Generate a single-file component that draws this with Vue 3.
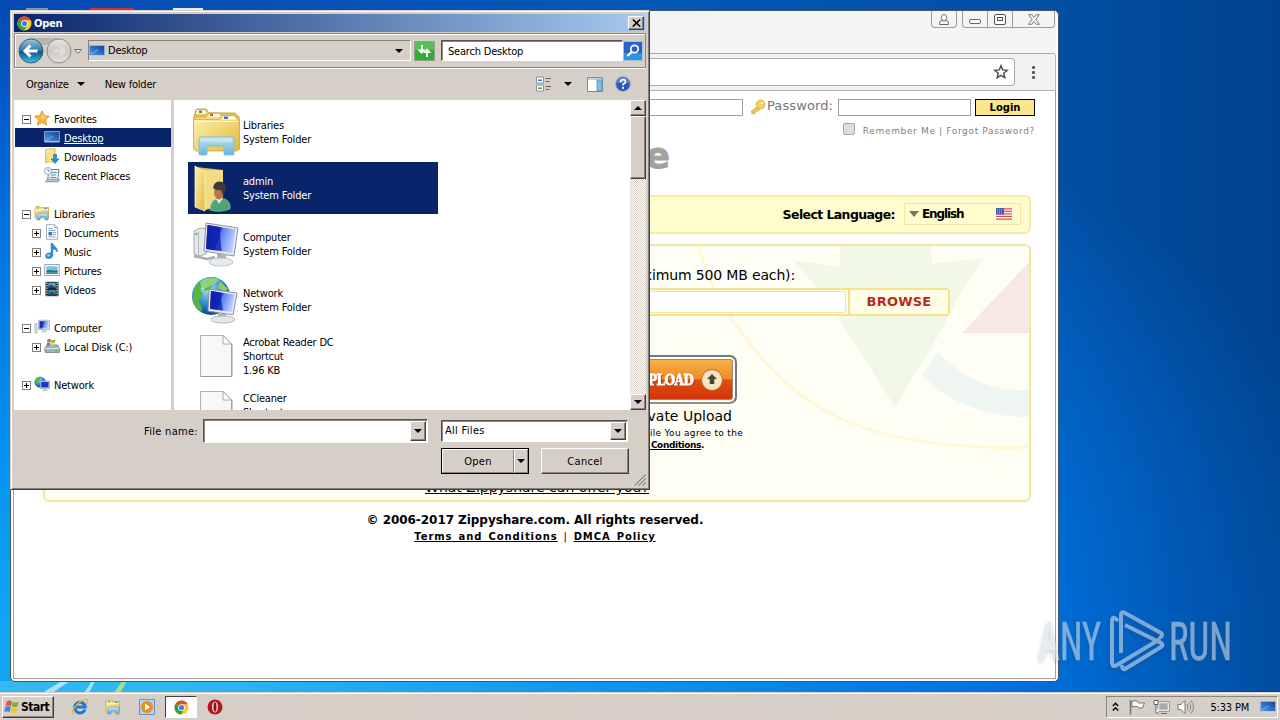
<script setup>
import { ref } from 'vue'

const tree = ref([
  { name: 'Favorites', icon: 'star', level: 0, box: '-' },
  { name: 'Desktop', icon: 'desktop', level: 1, active: true },
  { name: 'Downloads', icon: 'downloads', level: 1 },
  { name: 'Recent Places', icon: 'recent', level: 1 },
  { gap: true },
  { name: 'Libraries', icon: 'libraries', level: 0, box: '-' },
  { name: 'Documents', icon: 'document', level: 1, box: '+' },
  { name: 'Music', icon: 'music', level: 1, box: '+' },
  { name: 'Pictures', icon: 'pictures', level: 1, box: '+' },
  { name: 'Videos', icon: 'videos', level: 1, box: '+' },
  { gap: true },
  { name: 'Computer', icon: 'computer', level: 0, box: '-' },
  { name: 'Local Disk (C:)', icon: 'disk', level: 1, box: '+' },
  { gap: true },
  { name: 'Network', icon: 'network', level: 0, box: '+' }
])

const files = ref([
  { icon: 'big-libraries', lines: ['Libraries', 'System Folder'] },
  { icon: 'big-admin', lines: ['admin', 'System Folder'], selected: true },
  { icon: 'big-computer', lines: ['Computer', 'System Folder'] },
  { icon: 'big-network', lines: ['Network', 'System Folder'] },
  { icon: 'big-file', lines: ['Acrobat Reader DC', 'Shortcut', '1.96 KB'] },
  { icon: 'big-file', lines: ['CCleaner', 'Shortcut', '\u00a0'] }
])
</script>

<template>
  <div class="screen">
    <!-- icon sprites -->
    <svg class="sprites" width="0" height="0">
      <defs>
        <linearGradient id="gFolder" x1="0" y1="0" x2="1" y2="1">
          <stop offset="0" stop-color="#fdf3b4" /><stop offset="1" stop-color="#e3b83c" />
        </linearGradient>
        <linearGradient id="gStand" x1="0" y1="0" x2="0" y2="1">
          <stop offset="0" stop-color="#c4e8f8" /><stop offset="1" stop-color="#58b0da" />
        </linearGradient>
        <linearGradient id="gScreen" x1="0" y1="0" x2="1" y2="0.3">
          <stop offset="0" stop-color="#1226a8" /><stop offset="0.5" stop-color="#1a35d8" />
          <stop offset="0.55" stop-color="#5c7cf0" /><stop offset="1" stop-color="#b8ccff" />
        </linearGradient>
        <linearGradient id="gDesk" x1="0" y1="1" x2="1" y2="0">
          <stop offset="0" stop-color="#4d9df0" /><stop offset="1" stop-color="#173f92" />
        </linearGradient>
        <radialGradient id="gGlobe" cx="0.4" cy="0.3" r="0.7">
          <stop offset="0" stop-color="#a9e4f8" /><stop offset="0.6" stop-color="#2c87c8" /><stop offset="1" stop-color="#14448c" />
        </radialGradient>
        <linearGradient id="gBack" x1="0" y1="0" x2="0" y2="1">
          <stop offset="0" stop-color="#9cc7de" /><stop offset="0.48" stop-color="#2f7ca8" />
          <stop offset="0.5" stop-color="#0c4f82" /><stop offset="1" stop-color="#35c4ee" />
        </linearGradient>
        <linearGradient id="gFwd" x1="0" y1="0" x2="0" y2="1">
          <stop offset="0" stop-color="#e8e6e2" /><stop offset="0.5" stop-color="#cac7c1" /><stop offset="1" stop-color="#e6e3de" />
        </linearGradient>
        <linearGradient id="gGlow" x1="0" y1="0" x2="1" y2="0">
          <stop offset="0" stop-color="#4cc6ee" stop-opacity=".6" /><stop offset="1" stop-color="#2a9af0" stop-opacity="0" />
        </linearGradient>
      </defs>

      <symbol id="chrome" viewBox="0 0 16 16">
        <circle cx="8" cy="8" r="7.5" fill="#fbc927" />
        <path d="M8 8 1.5 4.2A7.5 7.5 0 0 1 14.5 4.4H8z" fill="#dc4a38" />
        <path d="M8 8 1.5 4.2A7.5 7.5 0 0 0 7.4 15.5L11 9.6z" fill="#2fa04e" />
        <circle cx="8" cy="8" r="3.6" fill="#fff" /><circle cx="8" cy="8" r="2.8" fill="#3f80e4" />
      </symbol>
      <symbol id="star" viewBox="0 0 16 16">
        <path d="M8 .8l2.2 4.9 5.2.6-3.9 3.5 1.1 5.3L8 12.4l-4.6 2.7 1.1-5.3L.6 6.3l5.2-.6z" fill="#f9b738" stroke="#d98718" stroke-width=".8" />
        <path d="M8 3.2l1.4 3.3 3 .5-3 .9L8 11z" fill="#fddc7c" />
      </symbol>
      <symbol id="desktop" viewBox="0 0 16 16">
        <path d="M.5 2.5h15v10H.5z" fill="url(#gDesk)" stroke="#8fb6dc" stroke-width=".8" />
        <path d="M.5 12.9h15" stroke="#c7dcf0" /><path d="M2 11c3-1 4-3 7-4" stroke="#9ccafa" fill="none" stroke-width=".7" />
      </symbol>
      <symbol id="downloads" viewBox="0 0 16 16">
        <path d="M1.5 1.5 6 .7h5V14H4l-2.5 1z" fill="url(#gFolder)" stroke="#d2a83a" stroke-width=".7" />
        <path d="M4.5 2.8 10 1.5V13L4.5 15z" fill="#fbe58b" />
        <path d="M9.5 6.5h3V11H15l-4 4.5L7 11h2.5z" fill="#2b8fd6" stroke="#1b67ac" stroke-width=".6" />
      </symbol>
      <symbol id="recent" viewBox="0 0 16 16">
        <path d="M5 2.5h10L13.5 14H3.500z" fill="#eaf1f6" stroke="#71828d" />
        <path d="M7 5.500h6M7 8h5M6 10.500h6" stroke="#6f8fa7" /><path d="M1.500 14.800h13l1-2.500H3z" fill="#bbc9d3" stroke="#6d7f8b" stroke-width=".7" />
        <circle cx="4" cy="4" r="3.500" fill="#f8fbfd" stroke="#9aa9b4" /><path d="M4 2v2h1.500" fill="none" stroke="#3a5a75" stroke-width=".8" />
      </symbol>
      <symbol id="libraries" viewBox="0 0 16 16">
        <path d="M1 3.500 2 1.500h4l1 1h7.500V13H1z" fill="url(#gFolder)" stroke="#d0a43a" stroke-width=".7" />
        <path d="M2 4.700h12" stroke="#fff7cf" /><path d="M3 3h2" stroke="#2e9b5b" /><path d="M10 3.300h3" stroke="#5a8bc9" />
        <path d="M3 15V9.500q0-1.500 1.500-1.500h8q1.500 0 1.500 1.500V15h-3v-3.300H6V15z" fill="url(#gStand)" stroke="#5097c1" stroke-width=".6" />
      </symbol>
      <symbol id="document" viewBox="0 0 16 16">
        <path d="M2.500.700h8l3.200 3V15.300H2.500z" fill="#fff" stroke="#8a99a7" stroke-width=".8" /><path d="M10.500.700v3h3.200" fill="#d6e1ea" stroke="#8a99a7" stroke-width=".7" />
        <path d="M4.500 4.500H9M4.500 6.500h7M9 8.500h3M9 10.500h3M4.500 12.800h7" stroke="#6e8fb5" stroke-width=".8" /><path d="M4.500 8h3.700v3.400H4.500z" fill="#3a77bd" />
      </symbol>
      <symbol id="music" viewBox="0 0 16 16">
        <path d="M7.200 .500h1.600c.6 3 5.200 3.800 4.400 8.500-.5-2-2.400-3-4.400-3.200v6.700C8.800 16 1.500 16.800 1.500 13c0-2.400 2.700-3.600 5.700-2.800z" fill="#2d8de0" stroke="#175fa8" stroke-width=".6" />
        <ellipse cx="4.600" cy="12.400" rx="1.900" ry="1.100" fill="#8fd0fa" />
      </symbol>
      <symbol id="pictures" viewBox="0 0 16 16">
        <path d="M.700 2.500h14.600v11H.700z" fill="#f7fafc" stroke="#8c9dac" stroke-width=".9" /><path d="M2.500 4.300h11v7.400h-11z" fill="#75c0e6" />
        <path d="M2.500 8.600c3-2 5 1 11-.6v3.700h-11z" fill="#2c6f6b" /><path d="M2.500 10.700h11" stroke="#57a2a7" />
      </symbol>
      <symbol id="videos" viewBox="0 0 16 16">
        <path d="M1.500.800h13v14.400h-13z" fill="#1f2a33" /><path d="M4.300 1.800h7.400V7H4.300z" fill="#5aa0de" /><path d="M4.300 9h7.400v5.200H4.300z" fill="#3c81c7" />
        <path d="M4.300 5.500 7 3.500l4.700 3V7H4.300zM4.300 13l3-2.200 4.400 2.500v.9H4.300z" fill="#2b4c3c" />
        <path d="M2.900 1.500v13M13.100 1.500v13" stroke="#e3ebf0" stroke-width="1.300" stroke-dasharray="1.300 1.200" />
      </symbol>
      <symbol id="computer" viewBox="0 0 16 16">
        <path d="M.800 5 3 4.500V14l-2.200-.5z" fill="#dfe4e8" stroke="#8e979e" stroke-width=".6" />
        <path d="M4.500 1.200h11v9.300h-11z" fill="#dfe6ee" stroke="#8b98a8" stroke-width=".6" /><path d="M5.500 2.200h9v7.300h-9z" fill="url(#gScreen)" />
        <path d="M8.500 10.500h3l1.800 2.700H6.700z" fill="#c7ced5" />
      </symbol>
      <symbol id="disk" viewBox="0 0 16 16">
        <path d="M.800 10 3 7h10.500l1.800 3.300v4.200H1.200z" fill="#a5b3b6" stroke="#61706f" stroke-width=".7" /><path d="M1 10.500h14" stroke="#dde8e8" />
        <path d="M11 12.700h3" stroke="#49d03c" stroke-width="1.400" /><path d="M3.500 1.600q2-1.300 3.600-.2L6.500 4.300q-2-.9-3.500.2z" fill="#e8592b" />
        <path d="M7.700 1.700q2 1 3.700 0L10.800 4.600q-2 .9-3.700 0z" fill="#6fb536" /><path d="M2.900 5q2-1.100 3.500-.2l-.6 2.800q-1.600-.8-3.300.2z" fill="#3d8ddc" /><path d="M7 5.100q2 1 3.700.1l-.6 2.700q-1.800.8-3.600 0z" fill="#f6c12f" />
      </symbol>
      <symbol id="network" viewBox="0 0 16 16">
        <circle cx="6" cy="6" r="5.500" fill="url(#gGlobe)" /><path d="M2 3q3-3 5-1L5 5 3 8 1 6z" fill="#53b54c" />
        <path d="M6.300 5h9.200v7.500H6.300z" fill="#e0e6ee" stroke="#8290a0" stroke-width=".6" /><path d="M7.200 5.900h7.400v5.600H7.200z" fill="#1b37c9" /><path d="M9.500 12.500h3l1.500 2.500H8z" fill="#c3cad1" />
      </symbol>

      <symbol id="big-libraries" viewBox="0 0 48 48">
        <path d="M2 9 4 2l1-1h9l3 4h26l4 4v32H2z" fill="#e6c45c" stroke="#b98d2c" stroke-width=".8" />
        <path d="M5 2h8l2 4H4z" fill="#f3f6ec" /><path d="M7 2.500h3V5H7z" fill="#3b9c56" />
        <path d="M2 9h12q1-4 3-4h11l3 4h16v32H2z" fill="#f5dc7f" stroke="#cba246" stroke-width=".8" />
        <path d="M17.500 6h9l2 3h-12z" fill="#fdfbe8" /><path d="M18 5.500h3V8h-3z" fill="#d0572d" />
        <path d="M1.500 11.500H28q1-4 3-4h12l3 3.500q2 1 1.500 3V41l-2 2H3.500l-2-2z" fill="url(#gFolder)" stroke="#d3aa45" stroke-width=".8" />
        <path d="M31 8.500h11l2 3H29.500z" fill="#fff" /><path d="M32 8.500h4V11h-4z" fill="#367dbf" /><path d="M3 13.500h43" stroke="#fff8d0" />
        <path d="M7 46V31q0-2 2-2h31q2 0 2 2v15q0 1-1 1h-8q-1 0-1-1v-8H15v8q0 1-1 1H8q-1 0-1-1z" fill="url(#gStand)" stroke="#7fbfdd" fill-opacity=".92" />
        <path d="M9 30h31v4H9z" fill="#c9ebfa" opacity=".6" />
      </symbol>
      <symbol id="big-admin" viewBox="0 0 48 48">
        <path d="M4 3 31 6v36l-18 4z" fill="#e0bb4d" /><path d="M11 6h20v36l-18 3z" fill="#f2dc83" />
        <path d="M3 2 13 8v39L3 43z" fill="url(#gFolder)" stroke="#fff5be" stroke-width=".8" />
        <path d="M18 46q1-11 8-11h7q6 3 5 10-10 4-20 1z" fill="#4fa477" stroke="#7cc79f" stroke-width=".7" /><path d="m24 35 3 5 4-6z" fill="#dbe8ed" />
        <ellipse cx="27" cy="28" rx="5" ry="7.500" fill="#ba7647" /><path d="M21 24q1-7 7-6.500 6 .5 5.500 7L31 34q0-5-2-8-4 1-8-2z" fill="#3e3a36" />
      </symbol>
      <symbol id="big-computer" viewBox="0 0 48 48">
        <path d="m2 11 6-3 7 1v24l-6 3-7-2z" fill="#e5e8eb" stroke="#a4aaaf" /><path d="M6.500 11v23" stroke="#b4babf" /><circle cx="4.300" cy="14" r="1.200" fill="#43cd36" />
        <path d="m2 36 13 3 8-2" stroke="#a4abb1" stroke-width="2.500" fill="none" />
        <path d="m14 3 32 5-4 28-30-5z" fill="#e5ebf1" stroke="#8a949e" /><path d="m15.500 5 28 4.500L40 33l-26-4z" fill="url(#gScreen)" /><path d="m15.500 5 12 2 2 24-15.500-2z" fill="#0d1fa8" opacity=".75" />
        <path d="M25 34h9v7h-9z" fill="#abb3ba" /><ellipse cx="29" cy="42" rx="12" ry="4" fill="#e8ebed" stroke="#bcc1c5" />
      </symbol>
      <symbol id="big-network" viewBox="0 0 48 48">
        <circle cx="19" cy="20" r="19" fill="url(#gGlobe)" /><path d="M1 22Q1 8 12 3l3 4-7 6 3 6-5 5 4 8-1 4Q1 30 1 22zM15 2q7-2 12 1l-6 4-2 6-6 2-2-4z" fill="#55b83b" /><path d="m28 5 8 8-3 3-7-4z" fill="#88cf62" />
        <path d="M8 6Q18-1 28 4q-8 6-18 10z" fill="#fff" opacity=".35" />
        <path d="m17 13 28 4-4 22-25-4z" fill="#e6ebf1" stroke="#8b95a0" /><path d="m19 15 23.500 3.500L39.500 36 18 33z" fill="url(#gScreen)" /><path d="m19 15 9 1.500 3 18-13-2z" fill="#0d1fa8" opacity=".75" />
        <path d="M26 38h8v5h-8z" fill="#abb3ba" /><ellipse cx="31" cy="43.500" rx="12" ry="3.500" fill="#e3e7ea" stroke="#b5babf" />
      </symbol>
      <symbol id="big-file" viewBox="0 0 48 48">
        <path d="M8.500 3.500H31l8.500 8.500V44.500H8.500z" fill="#f8f8f8" stroke="#b0b0b0" /><path d="M40 12v32.500H9" fill="none" stroke="#9a9a9a" /><path d="M31 3.500v8.500h8.500z" fill="#fff" stroke="#a7a7a7" />
      </symbol>
    </svg>

    <svg class="streaks" width="900" height="12" viewBox="0 0 900 12">
      <path d="M0 0h900v12H0z" fill="url(#gGlow)" />
      <path d="M42 12 62 0h8L52 12zM84 12 92 0h3l-6 12z" fill="#c9eefb" opacity=".8" />
      <path d="m114 12 8-12h5l-7 12z" fill="#c4e87a" opacity=".8" />
    </svg>

    <!-- browser window -->
    <div class="browser">
      <div class="tabstrip">
        <div class="win-btn user">
          <svg width="12" height="13" viewBox="0 0 12 13"><path d="M6 1.500a2.700 2.700 0 0 1 2 4.500q-.5.500 0 1 2.500.5 2.500 4.500h-9Q1.500 7.500 4 7q.5-.5 0-1a2.700 2.700 0 0 1 2-4.500z" fill="#fff" stroke="#666" /><path d="M4 7.500q2 1 4 0" fill="none" stroke="#666" /></svg>
        </div>
        <div class="win-btn group">
          <span><svg width="12" height="5"><rect x=".5" y=".5" width="11" height="4" rx="1.500" fill="#fff" stroke="#666" /></svg></span>
          <span><svg width="12" height="11"><rect x=".5" y=".5" width="11" height="10" rx="1.500" fill="#fff" stroke="#555" /><rect x="3.500" y="3.500" width="5" height="3" fill="#fff" stroke="#555" /></svg></span>
          <span class="wide"><svg width="12" height="11" viewBox="0 0 12 11"><path d="M.700.700h3L6 3.500 8.300.700h3L7.900 5.500l3.400 4.800h-3L6 7.500l-2.300 2.800h-3l3.400-4.800z" fill="#fff" stroke="#666" stroke-width=".9" /></svg></span>
        </div>
      </div>
      <div class="toolbar">
        <div class="omnibox">
          <svg width="16" height="16" viewBox="0 0 16 16"><path d="M8 1.800l1.700 4.100 4.500.4-3.400 2.900 1 4.400L8 11.300l-3.800 2.300 1-4.400-3.400-2.900 4.500-.4z" fill="none" stroke="#505050" stroke-width="1.500" /></svg>
        </div>
        <div class="dots"><i></i><i></i><i></i></div>
      </div>
      <div class="page">
        <div class="login-row">
          <div class="text-input left"></div>
          <svg class="key" width="16" height="16" viewBox="0 0 16 16"><path d="M8 7 1.500 12l.5 3 3-.5.500-2 2-.300L10 10z" fill="#f1c654" stroke="#cf9c33" stroke-width=".7" /><circle cx="10.500" cy="5.500" r="4.500" fill="#f5cf6b" stroke="#d7a640" stroke-width=".7" /><circle cx="12" cy="4" r="1.200" fill="#fff3cc" /></svg>
          <span class="pass-label">Password:</span>
          <div class="text-input right"></div>
          <div class="login-btn">Login</div>
        </div>
        <div class="remember-row">
          <i class="checkbox"></i>
          <span>Remember Me | Forgot Password?</span>
        </div>
        <div class="brand">Zippyshare</div>
        <div class="lang-bar">
          <b>Select Language:</b>
          <div class="lang-select">
            <i class="tri"></i><b>English</b>
            <svg width="16" height="12" viewBox="0 0 16 12"><path d="M0 0h16v12H0z" fill="#fff" /><path d="M0 .900h16M0 3.400h16M0 5.900h16M0 8.400h16M0 11.100h16" stroke="#d94b4b" stroke-width="1.200" /><path d="M0 0h8v6.500H0z" fill="#4458ad" /><path d="M1 1.500h6M1 3.300h6M1 5h6" stroke="#c9d2f2" stroke-width=".7" stroke-dasharray="1 1" /></svg>
          </div>
        </div>
        <div class="panel">
          <svg class="art" viewBox="45 246 984 254" width="984" height="254">
            <path d="M840 246h91l1 18 51-6q-29 43-43 75l-45 74-47-74q-21-38-56-73l48 7z" fill="#f1f8e6" />
            <path d="M1029 262v71h-67z" fill="#f8e8e4" />
            <path d="M938 352q37 41 91 38v27q-62 1-107-41z" fill="#eff5f1" />
            <path d="M699 246q12 50 46 91c52 72 124 115 284 110" fill="none" stroke="#fef8d6" stroke-width="3" />
          </svg>
          <div class="form">
            <p class="limit">Select files to upload (maximum 500 MB each):</p>
            <div class="file-row">
              <div class="file-field"></div>
              <div class="browse">BROWSE</div>
            </div>
            <div class="upload">
              <span>UPLOAD</span>
              <svg width="24" height="24" viewBox="0 0 24 24"><circle cx="12" cy="12" r="10.500" fill="#f5e3c4" stroke="#b66a2b" /><path d="M12 6l5 5h-2.700v5H9.700v-5H7z" fill="#4b4437" /></svg>
            </div>
            <p class="private">Private Upload</p>
            <p class="agree">By uploading a file You agree to the</p>
            <p class="agree terms"><u>Terms and Conditions</u>.</p>
          </div>
          <p class="offer">What Zippyshare can offer you?</p>
        </div>
        <p class="copy">© 2006-2017 Zippyshare.com. All rights reserved.</p>
        <p class="links"><u>Terms and Conditions</u><span> | </span><u>DMCA Policy</u></p>
      </div>
    </div>

    <i class="shortcut grey"></i><i class="shortcut red"></i><i class="shortcut white"></i>

    <!-- open file dialog -->
    <div class="dialog">
      <div class="titlebar">
        <svg width="15" height="15"><use href="#chrome" /></svg>
        <b>Open</b>
        <div class="close raised"><svg width="9" height="8" viewBox="0 0 9 8"><path d="M.8.500 8.200 7.500M8.200.500.8 7.500" stroke="#000" stroke-width="1.700" /></svg></div>
      </div>
      <div class="nav">
        <svg class="arrows" width="66" height="28" viewBox="0 0 66 28">
          <path d="M14 1h28v7H14z" fill="#b8b4ad" />
          <circle cx="14" cy="14" r="12" fill="url(#gBack)" stroke="#385e77" /><path d="M20.500 14H9M13.500 8.500 8 14l5.500 5.500" fill="none" stroke="#fff" stroke-width="3" />
          <circle cx="42" cy="14" r="12" fill="url(#gFwd)" stroke="#8e8b87" /><path d="M36 14h11M43 9.500l4.500 4.500-4.500 4.500" fill="none" stroke="#dfddd9" stroke-width="2.500" />
          <path d="M57.500 12.500h7L61 16.500z" fill="#eee" stroke="#77736e" />
        </svg>
        <div class="address">
          <svg width="16" height="16"><use href="#desktop" /></svg>
          <span>Desktop</span>
          <i class="caret"></i>
        </div>
        <svg class="refresh" width="21" height="20" viewBox="0 0 21 20"><path d="M.500.500h20v19H.500z" fill="#2fae36" stroke="#8fa08c" /><path d="M1 1h19v8H1z" fill="#71cc6b" opacity=".6" /><path d="M8 4v5M13 16v-5" stroke="#fff" stroke-width="2" /><path d="M3.500 8.500h8L7.500 13zM9 12h8.500L13 7.500z" fill="#fff" /></svg>
        <div class="search">Search Desktop</div>
        <svg class="magnifier" width="20" height="20" viewBox="0 0 20 20"><path d="M.500.500h19v19H.500z" fill="#2a62c9" stroke="#a7bfd9" /><path d="M1 12h18v7H1z" fill="#2fa6e4" opacity=".75" /><path d="m4.500 15 4-4" stroke="#fff" stroke-width="2.300" /><circle cx="11.500" cy="8" r="3.700" fill="#2a62c9" stroke="#fff" stroke-width="1.700" /></svg>
      </div>
      <div class="commands">
        <span class="organize">Organize</span><i class="caret"></i>
        <span class="newfolder">New folder</span>
        <svg class="views" width="16" height="16" viewBox="0 0 16 16"><path d="M.500 1h7v6h-7zM.500 9h7v6h-7z" fill="#fff" stroke="#8296a5" /><path d="M2 3.500h4V5H2z" fill="#3a7cc2" /><path d="M2 11.500h4V13H2z" fill="#5a9453" /><path d="M9.500 2.500H15M9.500 5.500h4M9.500 10.500H15M9.500 13.500h4" stroke="#667" /></svg>
        <i class="caret"></i>
        <svg class="pane" width="16" height="15" viewBox="0 0 16 15"><path d="M.500.500h15v14H.500z" fill="#fff" stroke="#6e8fae" /><path d="M1 1h14v2H1z" fill="#b9d4ea" /><path d="M10 3h5v11h-5z" fill="#80bfe0" stroke="#4e87a9" stroke-width=".7" /></svg>
        <svg class="help" width="16" height="16" viewBox="0 0 16 16"><circle cx="8" cy="8" r="7.300" fill="#2e56b5" stroke="#90a0c6" /><path d="M1.500 7a6.500 6.500 0 0 1 13 0z" fill="#7596dc" opacity=".6" /><path d="M5.500 6.200Q5.500 3.700 8 3.700t2.500 2.200Q10.500 7.300 8 8.300v1.300" fill="none" stroke="#fff" stroke-width="1.700" /><circle cx="8" cy="11.900" r="1.100" fill="#fff" /></svg>
      </div>
      <div class="content">
        <div class="tree">
          <div v-for="(item, i) in tree" :key="i" class="tree-row" :class="{ active: item.active, sub: item.level === 1 }">
            <template v-if="!item.gap">
              <i class="expander" :class="{ hidden: !item.box, plus: item.box === '+' }"></i>
              <svg width="16" height="16"><use :href="'#' + item.icon" /></svg>
              <span>{{ item.name }}</span>
            </template>
          </div>
        </div>
        <div class="files">
          <div v-for="(file, i) in files" :key="i" class="file" :class="{ selected: file.selected }">
            <svg width="48" height="48"><use :href="'#' + file.icon" /></svg>
            <div>
              <p v-for="line in file.lines" :key="line">{{ line }}</p>
            </div>
          </div>
        </div>
        <div class="scrollbar">
          <div class="sb-btn raised"><i class="up"></i></div>
          <div class="thumb raised"></div>
          <div class="sb-btn raised bottom"><i class="caret"></i></div>
        </div>
      </div>
      <div class="footer">
        <div class="field-row">
          <span class="fn-label">File name:</span>
          <div class="combo name"><div class="drop raised"><i class="caret"></i></div></div>
          <div class="combo type"><span>All Files</span><div class="drop raised"><i class="caret"></i></div></div>
        </div>
        <div class="button-row">
          <div class="open-btn"><div class="raised">Open</div><div class="raised split"><i class="caret"></i></div></div>
          <div class="cancel-btn raised">Cancel</div>
        </div>
        <svg class="grip" width="13" height="13" viewBox="0 0 13 13"><path d="M0 13 13 0M4 13l9-9M8 13l5-5" stroke="#fff" /><path d="M1 13 13 1M5 13l8-8M9 13l4-4" stroke="#88847d" stroke-width="1.300" /></svg>
      </div>
    </div>

    <!-- watermark -->
    <svg class="watermark" width="220" height="72" viewBox="0 0 220 72">
      <text x="4" y="54" textLength="62" lengthAdjust="spacingAndGlyphs">ANY</text>
      <text x="134" y="54" textLength="63" lengthAdjust="spacingAndGlyphs">RUN</text>
      <path d="M83 15Q77 8 77 16v40q0 6 5 3l43-26" />
      <path d="M86 47V9q0-4 4-2l36 20q3 3-2 5M90 19l36 18q3 2 0 4L90 63q-3 1-3-4" />
    </svg>

    <!-- taskbar -->
    <div class="taskbar">
      <div class="start raised">
        <svg width="16" height="16" viewBox="0 0 16 16"><path d="M2.500 2.600q3-2.100 5.400-.4L7 7.200Q4.300 5.600 1.500 7.300z" fill="#e5592c" /><path d="M8.700 2.700q3 1.400 5.800 0l-1 4.900q-3 1.400-5.700 0z" fill="#72b53a" /><path d="M1.300 8.200q3-1.700 5.500-.1l-1 5q-2.500-1.500-5.500.100z" fill="#3c84d7" /><path d="M7.500 8.600q3 1.400 5.800 0l-1 4.900q-3 1.400-5.800 0z" fill="#f8c332" /></svg>
        <b>Start</b>
      </div>
      <div class="quick">
        <svg width="18" height="18" viewBox="0 0 18 18"><path d="M14 11.500A5.300 5.300 0 1 1 14.300 9H5" fill="none" stroke="#2478d0" stroke-width="3" /><path d="M2 16.500C-1 13 9 .500 16 1.500c1.500.700.500 3-.500 4.500" fill="none" stroke="#e9b92c" stroke-width="1.300" /></svg>
        <svg width="16" height="16"><use href="#libraries" /></svg>
        <svg width="16" height="16" viewBox="0 0 16 16"><path d="M.500.500h15v15H.500z" fill="#b2d4f2" stroke="#5d94cb" /><circle cx="8" cy="8" r="6" fill="#f18a1f" /><path d="m6 4.500 5 3.500-5 3.500z" fill="#fff" /></svg>
        <div class="running"><svg width="15" height="15"><use href="#chrome" /></svg></div>
        <svg width="16" height="16" viewBox="0 0 16 16"><circle cx="8" cy="8" r="7.500" fill="#b5141b" /><ellipse cx="8" cy="8" rx="3" ry="5.500" fill="#efe4df" /><ellipse cx="8" cy="8" rx="1.500" ry="4.800" fill="#8e1116" /></svg>
      </div>
      <div class="tray">
        <svg width="7" height="10" viewBox="0 0 7 10"><path d="M.800 4 3.500 1.300 6.200 4M.800 8.500l2.700-2.700 2.700 2.700" fill="none" stroke="#000" stroke-width="1.400" /></svg>
        <svg class="flag" width="17" height="16" viewBox="0 0 17 16"><path d="M1.500 1v14.500" stroke="#777" stroke-width="1.600" /><path d="M3 2.500q3-1.500 6 0l.500 1.500h6l-2 5H9.500L8.500 7.500Q6 6.800 3 8z" fill="#fff" stroke="#777" /></svg>
        <svg width="17" height="16" viewBox="0 0 17 16"><path d="M5.500 3.500h10v8h-10z" fill="#aaa" stroke="#fff" stroke-width="1.500" /><path d="M4.800 2.800h11.500v9.500H4.800z" fill="none" stroke="#666" stroke-width=".7" /><path d="M1 1.500h4v4H1zM3 5.500V14h3M8 14.500h6" fill="#fff" stroke="#666" /></svg>
        <svg width="17" height="16" viewBox="0 0 17 16"><path d="M1 5.500h3l4-4v13l-4-4H1z" fill="#fff" stroke="#777" /><path d="M10 5q2 3 0 6M12 3.500q3.500 4.500 0 9M14 1.500q5 6.500 0 13" fill="none" stroke="#888" /></svg>
        <span>5:33 PM</span>
        <svg width="16" height="16"><use href="#desktop" /></svg>
      </div>
    </div>
  </div>
</template>

<style>
html,
body {
  margin: 0;
  background: #0a63c9;
}
</style>

<style scoped>
.screen {
  position: relative;
  width: 1280px;
  height: 720px;
  overflow: hidden;
  font-family: "DejaVu Sans Condensed", "DejaVu Sans", sans-serif;
  font-stretch: condensed;
  font-size: 11px;
  letter-spacing: -0.2px;
  color: #000;
  background:
    linear-gradient(90deg, transparent 1060px, rgba(0, 45, 110, 0.25) 1280px),
    radial-gradient(ellipse 1250px 680px at 180px 660px, #1cb4f5 0%, #0595ee 30%, rgba(0, 116, 226, 0.95) 65%, rgba(0, 80, 190, 0) 100%),
    linear-gradient(90deg, #0646b0 0, #0458b8 50%, #004a98 100%);
}

p {
  margin: 0;
}

svg {
  display: block;
  flex: none;
}

.sprites {
  position: absolute;
}

.streaks {
  position: absolute;
  left: 0;
  top: 681px;
}

i {
  display: block;
  flex: none;
}

.shortcut {
  position: absolute;
  top: 8px;
  height: 2px;
}

.grey {
  left: 26px;
  width: 22px;
  background: #8294b8;
}

.red {
  left: 90px;
  width: 44px;
  background: #d7302a;
}

.white {
  left: 173px;
  width: 30px;
  background: #e4ebf5;
}

/* browser */
.browser {
  position: absolute;
  left: 10px;
  top: 10px;
  width: 1049px;
  height: 672px;
  box-sizing: border-box;
  border: 1px solid #43566a;
  border-radius: 0 5px 5px 5px;
  background: #fcfcfc;
  padding: 0 2px 2px;
  display: flex;
  flex-direction: column;
  font-family: "DejaVu Sans", sans-serif;
  font-stretch: normal;
  letter-spacing: 0;
}

.tabstrip {
  height: 42px;
  flex: none;
  background: #f4f4f4;
  display: flex;
  justify-content: flex-end;
  gap: 5px;
  padding-right: 1px;
}

.win-btn {
  height: 16px;
  border: 1px solid #9b9b9b;
  border-top: 0;
  border-radius: 0 0 4px 4px;
  display: flex;
}

.user {
  width: 24px;
  align-items: center;
  justify-content: center;
}

.group span {
  width: 24px;
  display: flex;
  align-items: center;
  justify-content: center;
  border-right: 1px solid #9b9b9b;
}

.group span:first-child {
  padding-top: 5px;
  box-sizing: border-box;
  width: 25px;
}

.group .wide {
  width: 41px;
  border-right: 0;
}

.toolbar {
  height: 36px;
  flex: none;
  border-top: 1px solid #a9a9a9;
  border-bottom: 1px solid #b4b4b4;
  border-right: 1px solid #b9b9b9;
  border-radius: 0 3px 0 0;
  background: #f2f2f2;
  display: flex;
  align-items: center;
}

.omnibox {
  box-sizing: border-box;
  width: 1002px;
  height: 28px;
  border: 1px solid #a9a9a9;
  border-radius: 3px;
  background: #fff;
  display: flex;
  align-items: center;
  justify-content: flex-end;
  padding-right: 5px;
}

.dots {
  margin-left: 17px;
  display: flex;
  flex-direction: column;
  gap: 2px;
}

.dots i {
  width: 3px;
  height: 3px;
  border-radius: 1px;
  background: #5a5a5a;
}

.page {
  flex: 1;
  background: #fff;
  border: solid #a79f9b;
  border-width: 0 1px 1px;
  padding: 8px 25px 0 29px;
}

.login-row {
  display: flex;
  justify-content: flex-end;
  height: 17px;
  margin-right: -5px;
  color: #777;
}

.text-input {
  box-sizing: border-box;
  height: 17px;
  border: 1px solid #a0a0a0;
  background: #fff;
}

.left {
  width: 133px;
}

.key {
  margin: 0 0 0 7px;
}

.pass-label {
  width: 71px;
  margin-left: 1px;
  font-size: 13px;
  line-height: 14px;
  letter-spacing: 0.1px;
}

.right {
  width: 133px;
}

.login-btn {
  box-sizing: border-box;
  width: 60px;
  margin-left: 4px;
  border: 1px solid #000;
  background: #fce58f;
  color: #000;
  font-weight: bold;
  font-size: 10px;
  line-height: 16px;
  text-align: center;
}

.remember-row {
  display: flex;
  justify-content: flex-end;
  align-items: center;
  margin: 7px -5px 0 0;
  height: 14px;
  font-size: 9px;
  letter-spacing: 0.65px;
  color: #808080;
}

.remember-row span {
  padding-top: 2px;
}

.checkbox {
  width: 10px;
  height: 10px;
  margin: -2px 8px 0 0;
  border: 1px solid #a5a5a5;
  border-radius: 2px;
  background: #dedede;
}

.brand {
  width: 626px;
  height: 30px;
  margin-top: 4px;
  text-align: right;
  font: 900 36px/29px "DejaVu Sans", sans-serif;
  letter-spacing: -1px;
  color: #a2a2a2;
  -webkit-text-stroke: 1px #a2a2a2;
}

.lang-bar {
  box-sizing: border-box;
  width: 988px;
  height: 39px;
  margin-top: 24px;
  border: 2px solid #f4eba4;
  border-radius: 6px;
  background: #fffcce;
  display: flex;
  align-items: center;
  justify-content: flex-end;
  padding-right: 8px;
  font-size: 13px;
}

.lang-bar > b {
  font-size: 12.500px;
  letter-spacing: -0.6px;
}

.lang-select {
  box-sizing: border-box;
  width: 117px;
  height: 22px;
  margin: -2px 0 0 9px;
  padding: 0 8px 0 4px;
  border: 1px solid #f2e6a2;
  display: flex;
  align-items: center;
  font-size: 12px;
  letter-spacing: -1.1px;
}

.lang-select svg {
  margin-left: auto;
}

.tri {
  margin-right: 3px;
  border: 5px solid transparent;
  border-top: 6px solid #77775a;
  border-bottom: 0;
}

.panel {
  position: relative;
  box-sizing: border-box;
  width: 988px;
  height: 258px;
  margin-top: 10px;
  border: 2px solid #f4e79b;
  border-radius: 6px;
  background: #fffef5;
}

.art {
  position: absolute;
  left: 0;
  top: 0;
}

.form {
  position: relative;
  width: 905px;
  padding-top: 19px;
  display: flex;
  flex-direction: column;
  align-items: flex-end;
}

.limit {
  margin-right: 155px;
  font-size: 14px;
  line-height: 20px;
  letter-spacing: -0.15px;
}

.file-row {
  display: flex;
  box-sizing: border-box;
  width: 700px;
  height: 28px;
  margin-top: 3px;
  border: 2px solid #f4e28d;
  border-radius: 4px;
  background: #fffce0;
}

.file-field {
  flex: 1;
  margin: 1px 2px 1px 0;
  border: 1px solid #f3e7a4;
  border-radius: 3px;
  background: #fff;
}

.browse {
  width: 98px;
  border-left: 2px solid #f4e08a;
  text-align: center;
  font-weight: bold;
  font-size: 13px;
  line-height: 24px;
  letter-spacing: 0.2px;
  color: #b52a22;
  background: #fffde6;
}

.upload {
  box-sizing: border-box;
  width: 200px;
  height: 49px;
  margin: 39px 213px 0 0;
  border: 2px solid #75787c;
  border-bottom-color: #9b8c7c;
  border-radius: 7px;
  background: linear-gradient(#fbb84d, #ef8a27 48%, #dc4e0e 52%, #d33008);
  box-shadow: inset 0 0 0 2px #fff, inset 0 0 0 3px #a7876c;
  display: flex;
  align-items: center;
  justify-content: flex-end;
  gap: 7px;
  padding-right: 11px;
  color: #fff;
  font: bold 15px "DejaVu Serif", serif;
  letter-spacing: -0.9px;
  -webkit-text-stroke: 0.8px #fff;
  text-shadow: 1px 1px 1px #8b300b;
}

.upload span {
  transform: scaleX(0.82);
  transform-origin: right;
}

.private {
  margin: 2px 218px 0 0;
  font-size: 14px;
  line-height: 20px;
}

.agree {
  margin: 1px 207px 0 0;
  font-size: 9px;
  line-height: 12px;
  letter-spacing: 0.3px;
}

.terms {
  margin: 0 246px 0 0;
  font-weight: bold;
  letter-spacing: -0.4px;
}

.offer {
  position: relative;
  width: 984px;
  margin-top: 26px;
  text-align: center;
  font-size: 14px;
  line-height: 20px;
  text-decoration: underline;
}

.copy {
  width: 984px;
  margin-top: 9px;
  text-align: center;
  font-weight: bold;
  font-size: 12px;
  line-height: 18px;
  letter-spacing: -0.05px;
}

.links {
  width: 984px;
  text-align: center;
  font-weight: bold;
  font-size: 10px;
  line-height: 15px;
  letter-spacing: 0.9px;
  word-spacing: 1.800px;
}

.links span {
  font-weight: normal;
}

/* dialog */
.raised {
  box-sizing: border-box;
  border: 1px solid;
  border-color: #fff #404040 #404040 #fff;
  box-shadow: inset -1px -1px 0 #8a867f;
  background: #d6cfc7;
}

.caret {
  border: 4px solid transparent;
  border-top-color: #000;
  border-bottom: 0;
}

.up {
  border: 4px solid transparent;
  border-bottom-color: #000;
  border-top: 0;
}

.dialog {
  position: absolute;
  left: 10px;
  top: 10px;
  width: 640px;
  height: 480px;
  box-sizing: border-box;
  border: 1px solid;
  border-color: #d6cfc7 #404040 #404040 #d6cfc7;
  box-shadow: inset 1px 1px 0 #fff, inset -1px -1px 0 #808080;
  background: #d6cfc7;
  padding: 3px;
  display: flex;
  flex-direction: column;
}

.titlebar {
  height: 18px;
  flex: none;
  background: linear-gradient(90deg, #0a246a, #a6caf0);
  display: flex;
  align-items: center;
  color: #fff;
  padding: 0 2px 0 3px;
  font-size: 11px;
}

.titlebar b {
  margin-left: 2px;
}

.close {
  margin-left: auto;
  width: 16px;
  height: 14px;
  display: flex;
  align-items: center;
  justify-content: center;
}

.nav {
  height: 35px;
  flex: none;
  box-sizing: border-box;
  margin-top: 1px;
  border: 1px solid #8a867f;
  box-shadow: inset 1px 1px 0 #fff, 0 1px 0 #fff;
  display: flex;
  align-items: center;
  padding-left: 2px;
}

.address {
  box-sizing: border-box;
  width: 323px;
  height: 21px;
  margin-left: 5px;
  border: 1px solid;
  border-color: #86827c #fff #fff #86827c;
  display: flex;
  align-items: center;
}

.address span {
  margin-left: 3px;
}

.address .caret {
  margin-left: auto;
  margin-right: 7px;
}

.refresh {
  margin-left: 3px;
}

.search {
  box-sizing: border-box;
  width: 182px;
  height: 21px;
  margin-left: 6px;
  padding-left: 6px;
  border: 1px solid;
  border-color: #55514c #fff #fff #55514c;
  box-shadow: inset 1px 1px 0 #8a867f;
  background: #fff;
  line-height: 21px;
}

.magnifier {
  margin-left: 0;
}

.commands {
  height: 32px;
  flex: none;
  display: flex;
  align-items: center;
  padding-left: 12px;
}

.commands .caret {
  margin-left: 8px;
}

.newfolder {
  width: 431px;
  margin-left: 20px;
}

.commands .views + .caret {
  margin-left: 12px;
}

.pane {
  margin-left: 15px;
}

.help {
  margin-left: 12px;
}

.content {
  height: 310px;
  flex: none;
  background: #fff;
  display: flex;
}

.tree {
  box-sizing: border-box;
  width: 160px;
  padding-top: 9px;
  border-right: 3px solid #d6cfc7;
}

.tree-row {
  height: 19px;
  margin-left: 1px;
  padding-left: 7px;
  display: flex;
  align-items: center;
}

.tree-row > svg {
  margin-top: -2px;
}

.sub {
  padding-left: 17px;
}

.active {
  background: #0a246a;
  color: #fff;
}

.active span {
  text-decoration: underline;
}

.expander {
  box-sizing: border-box;
  width: 9px;
  height: 9px;
  margin: 2px 3px 0 0;
  border: 1px solid #84807a;
  background: linear-gradient(#000, #000) center / 5px 1px no-repeat;
}

.plus {
  background: linear-gradient(#000, #000) center / 5px 1px no-repeat, linear-gradient(#000, #000) center / 1px 5px no-repeat;
}

.hidden {
  visibility: hidden;
}

.tree-row span {
  margin-left: 4px;
  padding-top: 2px;
}

.files {
  flex: 1;
  box-sizing: border-box;
  padding: 6px 0 0 14px;
  overflow: hidden;
}

.file {
  width: 250px;
  height: 52px;
  margin-bottom: 4px;
  padding-left: 4px;
  box-sizing: border-box;
  display: flex;
  align-items: center;
  line-height: 14px;
}

.file > div {
  margin-left: 3px;
  padding-top: 2px;
}

.selected {
  background: #0a246a;
  color: #fff;
}

.scrollbar {
  width: 16px;
  background: repeating-conic-gradient(#fff 0 25%, #d6cfc7 0 50%) 0 0 / 2px 2px;
  display: flex;
  flex-direction: column;
}

.sb-btn {
  height: 16px;
  display: flex;
  align-items: center;
  justify-content: center;
}

.thumb {
  height: 63px;
}

.bottom {
  margin-top: auto;
}

.footer {
  position: relative;
  flex: 1;
  padding-top: 9px;
}

.field-row {
  display: flex;
  align-items: center;
  height: 24px;
}

.fn-label {
  width: 184px;
  text-align: right;
  margin-right: 5px;
  letter-spacing: 0.3px;
}

.combo {
  box-sizing: border-box;
  border: 1px solid;
  border-color: #55514c #fff #fff #55514c;
  box-shadow: inset 1px 1px 0 #8a867f;
  background: #fff;
  display: flex;
  align-items: center;
  padding: 1px;
}

.name {
  width: 225px;
  height: 24px;
}

.type {
  width: 187px;
  height: 22px;
  margin: -1px 0 0 13px;
  padding-left: 3px;
  letter-spacing: 0.3px;
}

.drop {
  width: 16px;
  height: 100%;
  margin-left: auto;
  display: flex;
  align-items: center;
  justify-content: center;
}

.button-row {
  display: flex;
  gap: 12px;
  margin: 5px 0 0 427px;
  line-height: 25px;
  text-align: center;
  letter-spacing: 0.3px;
}

.open-btn {
  width: 88px;
  height: 26px;
  box-sizing: border-box;
  border: 1px solid #000;
  display: flex;
}

.open-btn .raised {
  flex: 1;
  border-color: #fff #8a867f #8a867f #fff;
  box-shadow: none;
  line-height: 23px;
}

.open-btn .split {
  flex: none;
  width: 14px;
  display: flex;
  align-items: center;
  justify-content: center;
}

.cancel-btn {
  width: 88px;
  height: 26px;
}

.grip {
  position: absolute;
  right: 0;
  bottom: 0;
}

/* watermark */
.watermark {
  position: absolute;
  left: 1035px;
  top: 606px;
  opacity: 0.58;
  filter: drop-shadow(-1px 2px 2px rgba(40, 60, 90, 0.45));
}

.watermark text {
  font-family: Roboto, sans-serif;
  font-size: 53px;
  letter-spacing: 0;
  fill: #d5dfea;
  stroke: #d5dfea;
  stroke-width: 0.6;
}

.watermark path {
  fill: none;
  stroke: #d5dfea;
  stroke-width: 4;
  stroke-linejoin: round;
}

/* taskbar */
.taskbar {
  position: absolute;
  left: 0;
  top: 692px;
  width: 1280px;
  height: 28px;
  box-sizing: border-box;
  border-top: 1px solid #d6cfc7;
  box-shadow: inset 0 1px 0 #fff;
  background: #d6cfc7;
  display: flex;
  padding: 3px 2px 2px;
}

.start {
  width: 52px;
  height: 22px;
  display: flex;
  align-items: center;
  padding-left: 1px;
  font-size: 12px;
  letter-spacing: -0.5px;
}

.start b {
  margin-left: 1px;
}

.quick {
  display: flex;
  align-items: center;
  height: 22px;
  margin-left: 17px;
  gap: 17px;
}

.quick > svg:nth-child(2) {
  margin-left: -1px;
}

.quick > svg:nth-child(3) {
  margin-left: 1px;
}

.running {
  box-sizing: border-box;
  width: 32px;
  height: 22px;
  margin: 0 -7px 0 -7px;
  border: 1px solid;
  border-color: #404040 #fff #fff #404040;
  background: #fff;
  display: flex;
  align-items: center;
  justify-content: center;
}

.tray {
  box-sizing: border-box;
  width: 172px;
  height: 22px;
  margin-left: auto;
  border: 1px solid;
  border-color: #8a867f #fff #fff #8a867f;
  display: flex;
  align-items: center;
  padding: 0 1px 0 5px;
  gap: 7px;
}

.tray .flag {
  margin-left: 3px;
}

.tray span {
  margin-left: auto;
  margin-right: 4px;
}
</style>
